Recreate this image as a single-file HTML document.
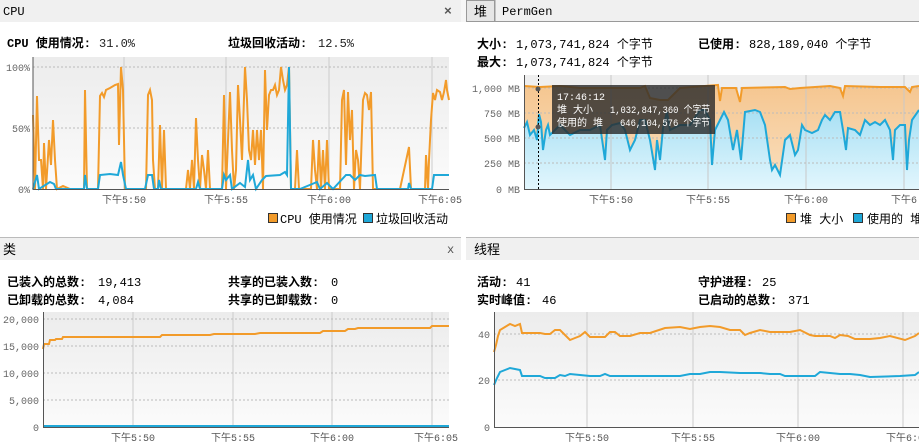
<!DOCTYPE html>
<html><head><meta charset="utf-8">
<style>
body{margin:0;width:919px;height:443px;background:#fff;overflow:hidden;font-family:"Liberation Sans","Noto Sans CJK SC",sans-serif}
svg text{font-family:"Liberation Mono","Noto Sans CJK SC",monospace}
</style></head><body>
<svg width="919" height="443" viewBox="0 0 919 443" xmlns="http://www.w3.org/2000/svg">
<defs>
<linearGradient id="bg" x1="0" y1="0" x2="0" y2="1"><stop offset="0" stop-color="#ececec"/><stop offset="1" stop-color="#fbfbfb"/></linearGradient>
<linearGradient id="og" x1="0" y1="0" x2="0" y2="1"><stop offset="0" stop-color="#f5c690"/><stop offset="1" stop-color="#fae0c0"/></linearGradient>
<linearGradient id="bl" x1="0" y1="0" x2="0" y2="1"><stop offset="0" stop-color="#a8e0f4"/><stop offset="1" stop-color="#e2f6fd"/></linearGradient>
</defs>
<!-- headers -->
<rect x="0" y="0" width="461" height="22" fill="#f0f0f0"/>
<rect x="461" y="0" width="5" height="22" fill="#f6f6f6"/>
<text x="3" y="15" font-size="12" fill="#000">CPU</text>
<text x="444" y="15" font-size="13" fill="#555" font-weight="bold">×</text>
<rect x="466" y="0" width="453" height="22" fill="#f0f0f0"/>
<line x1="466" y1="21.5" x2="919" y2="21.5" stroke="#999"/>
<rect x="466.5" y="0.5" width="28" height="21" fill="#e6e6e6" stroke="#999"/>
<text x="474" y="16" font-size="13" fill="#000">堆</text>
<line x1="495" y1="0" x2="495" y2="22" stroke="#999"/>
<text x="502" y="15" font-size="12" fill="#000">PermGen</text>
<line x1="0" y1="237.5" x2="461" y2="237.5" stroke="#bbb"/>
<rect x="0" y="238" width="461" height="22" fill="#f0f0f0"/>
<text x="3" y="254" font-size="13" fill="#000">类</text>
<text x="447" y="253" font-size="12" fill="#555">x</text>
<line x1="466" y1="237.5" x2="919" y2="237.5" stroke="#bbb"/>
<rect x="466" y="238" width="453" height="22" fill="#f0f0f0"/>
<text x="474" y="254" font-size="13" fill="#000">线程</text>

<!-- stats -->
<g font-size="12">
<text x="7" y="47" font-weight="bold">CPU 使用情况:</text><text x="99" y="47" fill="#222">31.0%</text>
<text x="228" y="47" font-weight="bold">垃圾回收活动:</text><text x="318" y="47" fill="#222">12.5%</text>
<text x="477" y="48" font-weight="bold">大小:</text><text x="516" y="48">1,073,741,824 个字节</text>
<text x="477" y="66" font-weight="bold">最大:</text><text x="516" y="66">1,073,741,824 个字节</text>
<text x="698" y="48" font-weight="bold">已使用:</text><text x="749" y="48">828,189,040 个字节</text>
<text x="7" y="286" font-weight="bold">已装入的总数:</text><text x="98" y="286">19,413</text>
<text x="7" y="304" font-weight="bold">已卸载的总数:</text><text x="98" y="304">4,084</text>
<text x="228" y="286" font-weight="bold">共享的已装入数:</text><text x="331" y="286">0</text>
<text x="228" y="304" font-weight="bold">共享的已卸载数:</text><text x="331" y="304">0</text>
<text x="477" y="286" font-weight="bold">活动:</text><text x="516" y="286">41</text>
<text x="477" y="304" font-weight="bold">实时峰值:</text><text x="542" y="304">46</text>
<text x="698" y="286" font-weight="bold">守护进程:</text><text x="762" y="286">25</text>
<text x="698" y="304" font-weight="bold">已启动的总数:</text><text x="788" y="304">371</text>
</g>

<!-- CPU chart -->
<rect x="33" y="57" width="416" height="132" fill="url(#bg)"/>
<g stroke="#ccc"><line x1="124" y1="57" x2="124" y2="189"/><line x1="226" y1="57" x2="226" y2="189"/><line x1="329" y1="57" x2="329" y2="189"/><line x1="432" y1="57" x2="432" y2="189"/></g>
<g stroke="#bbb" stroke-dasharray="2,2"><line x1="33" y1="67" x2="449" y2="67"/><line x1="33" y1="128" x2="449" y2="128"/></g>
<polyline fill="none" stroke="#f29b2a" stroke-width="2" points="33,115 35,189 37,96 39,160 41,160 43,189 44,143 46,189 49,140 51,165 53,120 55,160 57,189 63,186 70,189 84,189 85,90 87,189 98,189 100,96 102,93 104,97 106,90 110,88 115,85 118,84 119,145 121,67 123,90 125,189 130,189 146,189 148,95 150,90 152,100 153,160 155,189 158,189 160,125 162,189 164,130 166,189 186,189 188,170 190,189 192,160 194,189 196,118 198,160 200,189 202,155 204,170 206,189 208,150 210,189 222,189 224,95 226,189 230,92 232,150 234,189 236,170 238,85 240,120 242,160 245,67 247,100 249,150 251,160 253,130 255,165 257,130 259,160 261,130 263,189 265,70 267,130 269,95 271,90 273,90 275,85 277,95 279,90 281,67 283,80 285,90 287,85 289,67 291,189 295,189 297,150 299,189 311,189 313,140 315,170 317,189 319,140 321,189 323,150 325,189 327,140 329,189 340,189 342,100 344,90 346,165 348,92 350,140 352,110 354,189 356,150 358,160 360,189 363,100 365,93 367,95 369,110 371,92 373,189 400,189 409,147 411,189 423,189 425,189 426,155 428,189 429,160 431,120 433,93 435,100 437,90 440,92 442,100 444,92 446,80 447,90 449,100"/>
<polyline fill="none" stroke="#1fa8d8" stroke-width="2" points="33,189 37,175 39,189 50,182 54,184 56,189 84,189 85,175 87,189 98,189 100,175 110,174 118,175 121,162 123,175 126,189 145,189 148,175 152,175 154,189 158,189 159,180 161,189 196,189 198,182 200,189 222,189 224,175 226,180 230,175 232,189 240,183 245,187 248,160 250,180 253,175 256,189 262,180 266,176 280,175 285,172 287,175 289,67 291,189 300,189 317,182 320,189 327,183 333,189 346,175 350,175 355,180 360,175 365,176 375,175 377,189 408,189 409,183 411,189 432,189 434,175 449,175"/>
<line x1="33" y1="57" x2="33" y2="190" stroke="#555"/><line x1="33" y1="189.5" x2="449" y2="189.5" stroke="#555"/>
<g font-size="10" fill="#666" text-anchor="end"><text x="30" y="71">100%</text><text x="30" y="132">50%</text><text x="30" y="193">0%</text></g>
<g font-size="10" fill="#555" text-anchor="middle"><text x="124" y="203">下午5:50</text><text x="226" y="203">下午5:55</text><text x="329" y="203">下午6:00</text><text x="440" y="203">下午6:05</text></g>
<g font-size="12"><rect x="268.5" y="213.5" width="9" height="9" fill="#f29b2a" stroke="#333"/><text x="280" y="223">CPU 使用情况</text>
<rect x="363.5" y="213.5" width="9" height="9" fill="#1fa8d8" stroke="#333"/><text x="376" y="223">垃圾回收活动</text></g>

<!-- Heap chart -->
<rect x="525" y="75" width="394" height="114" fill="#efefef"/>
<polygon fill="url(#og)" points="525,189 524,86 540,87 560,86 580,88 640,88 645,86 650,98 660,100 668,100 680,88 718,85 720,101 722,88 736,88 740,102 742,88 785,87 790,89 800,88 830,86 840,88 843,96 845,86 880,87 905,87 910,92 912,87 919,86 919,189"/>
<polygon fill="url(#bl)" points="525,189 524,128 527,122 530,135 534,130 537,140 539,114 541,122 543,150 546,130 548,125 550,135 560,125 565,130 570,135 580,130 590,130 600,125 605,160 607,130 612,125 620,123 625,130 630,150 635,140 640,120 645,120 650,140 655,170 657,140 660,160 663,128 667,112 670,130 680,125 690,125 700,110 705,110 710,120 712,165 715,130 720,120 724,112 728,120 733,150 737,130 741,160 745,112 755,110 760,112 765,125 770,160 772,170 775,165 780,175 785,140 790,135 795,155 798,150 802,125 805,130 812,133 818,130 822,120 825,115 830,120 835,112 840,112 843,130 846,150 848,128 855,130 860,135 865,120 870,125 875,122 880,125 885,120 890,130 893,160 895,130 900,125 905,125 907,170 909,140 912,120 919,110 919,189"/>
<g stroke="#c8c8c8"><line x1="611" y1="75" x2="611" y2="189"/><line x1="708" y1="75" x2="708" y2="189"/><line x1="806" y1="75" x2="806" y2="189"/><line x1="904" y1="75" x2="904" y2="189"/></g>
<g stroke="#bbb" stroke-dasharray="2,2"><line x1="524" y1="88" x2="919" y2="88"/><line x1="524" y1="113" x2="919" y2="113"/><line x1="524" y1="138" x2="919" y2="138"/><line x1="524" y1="163" x2="919" y2="163"/></g>
<polyline fill="none" stroke="#f29b2a" stroke-width="2" points="524,86 540,87 560,86 580,88 640,88 645,86 650,98 660,100 668,100 680,88 718,85 720,101 722,88 736,88 740,102 742,88 785,87 790,89 800,88 830,86 840,88 843,96 845,86 880,87 905,87 910,92 912,87 919,86"/>
<polyline fill="none" stroke="#1fa8d8" stroke-width="2" points="524,128 527,122 530,135 534,130 537,140 539,114 541,122 543,150 546,130 548,125 550,135 560,125 565,130 570,135 580,130 590,130 600,125 605,160 607,130 612,125 620,123 625,130 630,150 635,140 640,120 645,120 650,140 655,170 657,140 660,160 663,128 667,112 670,130 680,125 690,125 700,110 705,110 710,120 712,165 715,130 720,120 724,112 728,120 733,150 737,130 741,160 745,112 755,110 760,112 765,125 770,160 772,170 775,165 780,175 785,140 790,135 795,155 798,150 802,125 805,130 812,133 818,130 822,120 825,115 830,120 835,112 840,112 843,130 846,150 848,128 855,130 860,135 865,120 870,125 875,122 880,125 885,120 890,130 893,160 895,130 900,125 905,125 907,170 909,140 912,120 919,110"/>
<line x1="538.5" y1="75" x2="538.5" y2="189" stroke="#000" stroke-dasharray="2,2"/>
<circle cx="538" cy="89" r="2.5" fill="#555"/><circle cx="538" cy="127" r="2.5" fill="#555"/>
<rect x="552" y="85" width="163" height="49" fill="#2c2c2c" fill-opacity="0.82"/>
<g font-size="10" fill="#fff"><text x="557" y="100">17:46:12</text><text x="557" y="113">堆 大小</text><text x="610" y="113" textLength="100" lengthAdjust="spacingAndGlyphs">1,032,847,360 个字节</text><text x="557" y="126">使用的 堆</text><text x="620" y="126" textLength="90" lengthAdjust="spacingAndGlyphs">646,104,576 个字节</text></g>
<line x1="524.5" y1="75" x2="524.5" y2="190" stroke="#555"/><line x1="524" y1="189.5" x2="919" y2="189.5" stroke="#555"/>
<g font-size="10" fill="#666" text-anchor="end"><text x="520" y="92">1,000 MB</text><text x="520" y="117">750 MB</text><text x="520" y="142">500 MB</text><text x="520" y="167">250 MB</text><text x="520" y="193">0 MB</text></g>
<g font-size="10" fill="#555" text-anchor="middle"><text x="611" y="203">下午5:50</text><text x="708" y="203">下午5:55</text><text x="806" y="203">下午6:00</text><text x="910" y="203">下午6:0</text></g>
<g font-size="12"><rect x="786.5" y="213.5" width="9" height="9" fill="#f29b2a" stroke="#333"/><text x="800" y="223">堆 大小</text>
<rect x="853.5" y="213.5" width="9" height="9" fill="#1fa8d8" stroke="#333"/><text x="867" y="223">使用的 堆</text></g>

<!-- Classes chart -->
<rect x="43" y="312" width="406" height="115" fill="url(#bg)"/>
<g stroke="#ccc"><line x1="133" y1="312" x2="133" y2="427"/><line x1="233" y1="312" x2="233" y2="427"/><line x1="332" y1="312" x2="332" y2="427"/><line x1="432" y1="312" x2="432" y2="427"/></g>
<g stroke="#bbb" stroke-dasharray="2,2"><line x1="43" y1="319" x2="449" y2="319"/><line x1="43" y1="346" x2="449" y2="346"/><line x1="43" y1="373" x2="449" y2="373"/><line x1="43" y1="400" x2="449" y2="400"/></g>
<polyline fill="none" stroke="#f29b2a" stroke-width="2" points="43,349 44,344 49,344 50,340 55,340 56,339 62,339 63,337 90,337 160,337 162,335 210,335 214,334 255,334 260,333 320,333 323,331 345,331 348,329 355,329 358,328 430,328 432,326 449,326"/>
<line x1="43" y1="426" x2="449" y2="426" stroke="#1fa8d8" stroke-width="2"/>
<line x1="43.5" y1="312" x2="43.5" y2="428" stroke="#555"/><line x1="43" y1="427.5" x2="449" y2="427.5" stroke="#555"/>
<g font-size="10" fill="#666" text-anchor="end"><text x="39" y="323">20,000</text><text x="39" y="350">15,000</text><text x="39" y="377">10,000</text><text x="39" y="404">5,000</text><text x="39" y="431">0</text></g>
<g font-size="10" fill="#555" text-anchor="middle"><text x="133" y="441">下午5:50</text><text x="233" y="441">下午5:55</text><text x="332" y="441">下午6:00</text><text x="436" y="441">下午6:05</text></g>

<!-- Threads chart -->
<rect x="494" y="312" width="425" height="115" fill="url(#bg)"/>
<g stroke="#ccc"><line x1="587" y1="312" x2="587" y2="427"/><line x1="693" y1="312" x2="693" y2="427"/><line x1="798" y1="312" x2="798" y2="427"/><line x1="903" y1="312" x2="903" y2="427"/></g>
<g stroke="#bbb" stroke-dasharray="2,2"><line x1="494" y1="334" x2="919" y2="334"/><line x1="494" y1="380" x2="919" y2="380"/></g>
<polyline fill="none" stroke="#f29b2a" stroke-width="2" points="494,352 496,345 498,336 500,330 505,327 510,324 515,326 520,324 522,333 540,333 545,334 550,334 555,330 560,330 565,335 570,340 575,338 580,336 585,332 590,337 605,337 610,332 615,332 620,336 630,336 640,333 650,333 665,328 680,327 690,329 700,327 710,326 720,327 730,330 740,330 745,335 750,333 760,330 770,332 790,332 800,330 810,335 815,336 830,336 835,338 840,335 848,336 855,339 870,339 880,338 890,336 905,340 910,338 915,336 919,333"/>
<polyline fill="none" stroke="#1fa8d8" stroke-width="2" points="494,385 497,378 500,372 505,370 510,368 515,369 520,370 522,376 540,376 545,378 555,378 560,375 565,376 570,374 580,375 590,376 600,376 605,374 610,376 640,376 680,376 690,374 700,374 710,372 720,372 740,373 760,373 770,374 780,374 785,376 815,376 820,372 830,373 840,374 850,374 860,375 870,377 900,376 915,375 919,372"/>
<line x1="494.5" y1="312" x2="494.5" y2="428" stroke="#555"/><line x1="494" y1="427.5" x2="919" y2="427.5" stroke="#555"/>
<g font-size="10" fill="#666" text-anchor="end"><text x="490" y="338">40</text><text x="490" y="384">20</text><text x="490" y="431">0</text></g>
<g font-size="10" fill="#555" text-anchor="middle"><text x="587" y="441">下午5:50</text><text x="693" y="441">下午5:55</text><text x="798" y="441">下午6:00</text><text x="908" y="441">下午6:05</text></g>
</svg>
</body></html>
